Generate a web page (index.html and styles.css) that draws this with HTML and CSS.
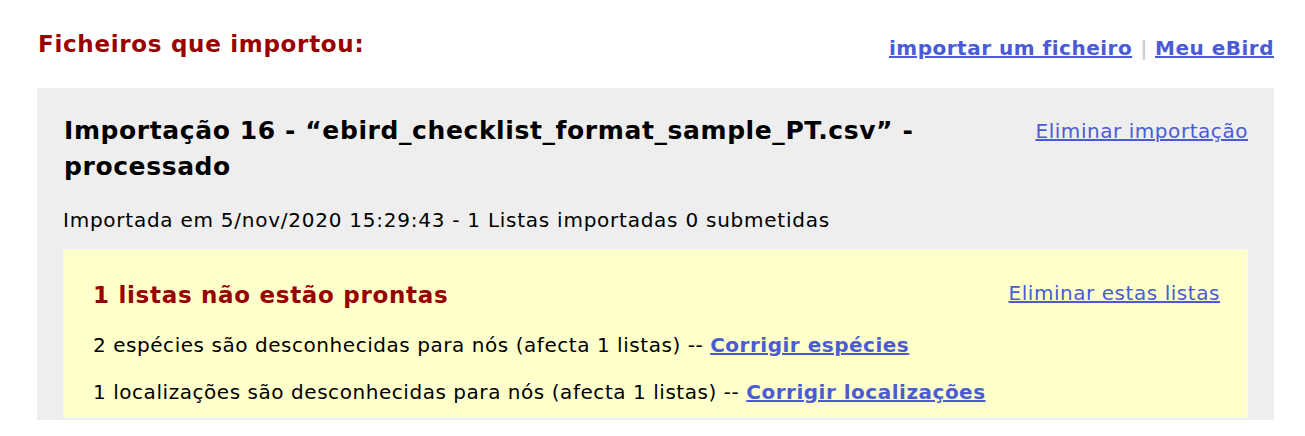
FILE: index.html
```html
<!DOCTYPE html>
<html lang="pt">
<head>
<meta charset="utf-8">
<title>Ficheiros que importou</title>
<link rel="stylesheet" href="styles.css">
</head>
<body>
<div class="page">
  <div class="top">
    <h2 class="title">Ficheiros que importou:</h2>
    <div class="toplinks"><a href="#">importar um ficheiro</a><span class="sep">|</span><a href="#">Meu eBird</a></div>
  </div>
  <div class="import">
    <div class="import-head">
      <h3 class="import-title">Importação 16 - “ebird_checklist_format_sample_PT.csv” - processado</h3>
      <a class="del" href="#">Eliminar importação</a>
    </div>
    <p class="meta">Importada em 5/nov/2020 15:29:43 - 1 Listas importadas 0 submetidas</p>
    <div class="notready">
      <div class="nr-head">
        <h4 class="nr-title">1 listas não estão prontas</h4>
        <a class="del" href="#">Eliminar estas listas</a>
      </div>
      <p class="nr-line">2 espécies são desconhecidas para nós (afecta 1 listas) -- <a class="fix" href="#">Corrigir espécies</a></p>
      <p class="nr-line">1 localizações são desconhecidas para nós (afecta 1 listas) -- <a class="fix" href="#">Corrigir localizações</a></p>
    </div>
  </div>
</div>
</body>
</html>
```
FILE: styles.css
```css
html, body {
  margin: 0;
  padding: 0;
  background: #ffffff;
}
body {
  font-family: "DejaVu Sans", Verdana, sans-serif;
  color: #000;
}
.page {
  padding: 29px 31px 0 37px;
}
.top {
  display: flex;
  justify-content: space-between;
  align-items: flex-start;
  margin-bottom: 25px;
}
.title {
  margin: 0 0 0 1px;
  font-size: 23px;
  font-weight: bold;
  letter-spacing: 0.7px;
  color: #990000;
  line-height: 30px;
}
.toplinks {
  font-size: 20px;
  font-weight: bold;
  letter-spacing: 0.5px;
  line-height: 30px;
  margin-top: 4px;
}
.toplinks a {
  color: #4a5bd5;
}
.sep {
  color: #cccccc;
  margin: 0 7px 0 8px;
}
.import {
  background: #eeeeee;
  padding: 25px 26px 2px 26px;
}
.import-head {
  display: flex;
  justify-content: space-between;
  align-items: flex-start;
}
.import-title {
  margin: 0 0 0 1px;
  font-size: 25px;
  font-weight: bold;
  letter-spacing: 0.6px;
  line-height: 36px;
  max-width: 900px;
}
.del {
  color: #4a5bd5;
  font-size: 20px;
  letter-spacing: 0.55px;
  line-height: 30px;
  white-space: nowrap;
}
.import-head .del {
  margin-top: 3px;
}
.meta {
  margin: 20px 0 14px 0;
  font-size: 20px;
  letter-spacing: 0.75px;
  line-height: 30px;
}
.notready {
  background: #ffffcc;
  border: 1px solid #f8f8ee;
  padding: 27px 27px 7px 29px;
}
.nr-head {
  display: flex;
  justify-content: space-between;
  align-items: flex-start;
  margin-bottom: 14px;
}
.nr-head .del {
  margin-top: 1px;
}
.nr-title {
  margin: 0;
  font-size: 23px;
  font-weight: bold;
  letter-spacing: 0.7px;
  color: #990000;
  line-height: 36px;
}
.nr-line {
  margin: 10px 0 0 0;
  font-size: 20px;
  letter-spacing: 0.55px;
  line-height: 36px;
}
.nr-line + .nr-line {
  margin-top: 11px;
}
.fix {
  color: #4a5bd5;
  font-weight: bold;
  letter-spacing: 0.5px;
}
```
